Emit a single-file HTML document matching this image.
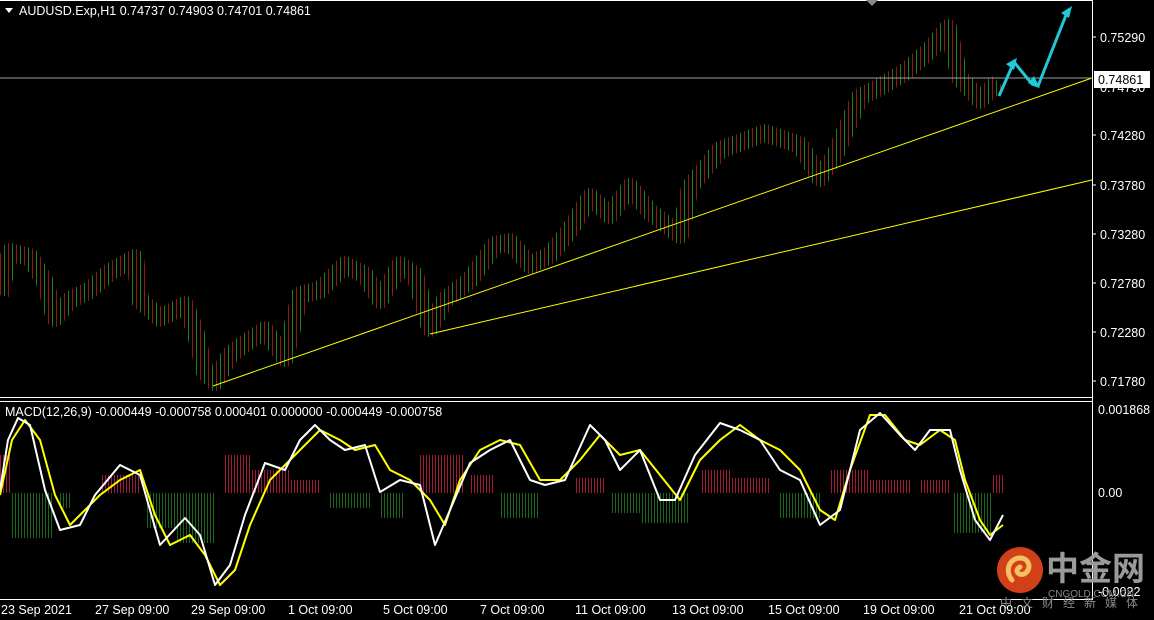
<!DOCTYPE html>
<html><head><meta charset="utf-8"><style>
html,body{margin:0;padding:0;background:#000;width:1154px;height:620px;overflow:hidden}
</style></head><body>
<svg width="1154" height="620" viewBox="0 0 1154 620" xmlns="http://www.w3.org/2000/svg" font-family="Liberation Sans, sans-serif">
<defs>
<pattern id="bars" x="0" y="0" width="8" height="4" patternUnits="userSpaceOnUse">
<rect x="0" y="0" width="1" height="4" fill="#c02020"/><rect x="4" y="0" width="1" height="4" fill="#20b020"/>
</pattern>
<pattern id="hr" width="3" height="4" patternUnits="userSpaceOnUse"><rect width="1" height="4" fill="#a01c38"/></pattern>
<pattern id="hg" width="3" height="4" patternUnits="userSpaceOnUse"><rect width="1" height="4" fill="#1a661a"/></pattern>
</defs>
<rect width="1154" height="620" fill="#000"/>
<polyline fill="none" stroke="url(#bars)" stroke-width="18" stroke-linejoin="round" opacity="0.75" points="0,295 10,252 30,257 45,282 55,318 70,300 90,290 110,272 135,258 140,300 160,318 185,305 195,330 205,372 215,382 230,355 250,340 265,330 285,358 300,295 320,290 345,265 365,275 380,300 400,265 415,275 430,328 445,300 470,280 495,245 510,242 530,265 550,255 570,230 590,197 610,215 630,187 650,212 680,235 690,187 720,150 765,133 800,145 820,178 835,155 860,97 880,87 905,72 930,50 948,28 960,78 980,100 998,82"/>
<line x1="213" y1="386" x2="1092" y2="78" stroke="#ffff00" stroke-width="1"/>
<line x1="430" y1="334" x2="1092" y2="180" stroke="#ffff00" stroke-width="1"/>
<line x1="0" y1="78" x2="1092" y2="78" stroke="#a0a0a0" stroke-width="1"/>
<g stroke="#22c8d8" stroke-width="3" fill="#22c8d8">
<polyline fill="none" points="999,96 1014,62 1032,84 1038,86 1068,10"/>
<polygon points="1017,58 1006,64 1014,70" stroke="none"/>
<polygon points="1040,88 1028,83 1034,76" stroke="none"/>
<polygon points="1072,6 1061,13 1069,18" stroke="none"/>
</g>
<line x1="0" y1="0.5" x2="1093" y2="0.5" stroke="#fff"/>
<line x1="1092.5" y1="0" x2="1092.5" y2="600" stroke="#fff"/>
<line x1="0" y1="397.5" x2="1093" y2="397.5" stroke="#fff"/>
<line x1="0" y1="401.5" x2="1093" y2="401.5" stroke="#fff"/>
<line x1="0" y1="599.5" x2="1093" y2="599.5" stroke="#fff"/>
<polygon points="866,0 878,0 872,6" fill="#888"/>
<polygon points="5,8 13,8 9,13" fill="#fff"/>
<text x="19" y="15" font-size="12.5" fill="#fff">AUDUSD.Exp,H1  0.74737 0.74903 0.74701 0.74861</text>
<g font-size="12.5" fill="#fff">
<text x="1100" y="42">0.75290</text>
<text x="1100" y="92">0.74790</text>
<text x="1100" y="140">0.74280</text>
<text x="1100" y="190">0.73780</text>
<text x="1100" y="239">0.73280</text>
<text x="1100" y="288">0.72780</text>
<text x="1100" y="337">0.72280</text>
<text x="1100" y="386">0.71780</text>
</g>
<g stroke="#fff"><line x1="1092" y1="37" x2="1096" y2="37"/><line x1="1092" y1="135" x2="1096" y2="135"/><line x1="1092" y1="185" x2="1096" y2="185"/><line x1="1092" y1="234" x2="1096" y2="234"/><line x1="1092" y1="283" x2="1096" y2="283"/><line x1="1092" y1="332" x2="1096" y2="332"/><line x1="1092" y1="381" x2="1096" y2="381"/></g>
<rect x="1094" y="71" width="56" height="17" fill="#fff"/>
<text x="1098" y="84" font-size="12.5" fill="#000">0.74861</text>
<g>
<rect x="0" y="455" width="12" height="38" fill="url(#hr)"/>
<rect x="12" y="493" width="40" height="45" fill="url(#hg)"/>
<rect x="60" y="493" width="12" height="15" fill="url(#hg)"/>
<rect x="100" y="475" width="40" height="18" fill="url(#hr)"/>
<rect x="145" y="493" width="30" height="35" fill="url(#hg)"/>
<rect x="175" y="493" width="40" height="50" fill="url(#hg)"/>
<rect x="225" y="455" width="25" height="38" fill="url(#hr)"/>
<rect x="250" y="470" width="40" height="23" fill="url(#hr)"/>
<rect x="290" y="480" width="30" height="13" fill="url(#hr)"/>
<rect x="330" y="493" width="40" height="15" fill="url(#hg)"/>
<rect x="380" y="493" width="25" height="25" fill="url(#hg)"/>
<rect x="420" y="455" width="45" height="38" fill="url(#hr)"/>
<rect x="470" y="475" width="25" height="18" fill="url(#hr)"/>
<rect x="500" y="493" width="40" height="25" fill="url(#hg)"/>
<rect x="575" y="478" width="30" height="15" fill="url(#hr)"/>
<rect x="610" y="493" width="30" height="20" fill="url(#hg)"/>
<rect x="640" y="493" width="50" height="30" fill="url(#hg)"/>
<rect x="700" y="470" width="30" height="23" fill="url(#hr)"/>
<rect x="730" y="478" width="40" height="15" fill="url(#hr)"/>
<rect x="780" y="493" width="40" height="25" fill="url(#hg)"/>
<rect x="830" y="470" width="40" height="23" fill="url(#hr)"/>
<rect x="870" y="480" width="40" height="13" fill="url(#hr)"/>
<rect x="920" y="480" width="30" height="13" fill="url(#hr)"/>
<rect x="952" y="493" width="40" height="40" fill="url(#hg)"/>
<rect x="993" y="475" width="12" height="18" fill="url(#hr)"/>
</g>
<polyline fill="none" stroke="#ffff00" stroke-width="2" stroke-linejoin="round" points="0,495 12,440 25,420 40,440 55,495 70,525 85,510 100,495 120,480 140,470 155,515 170,545 190,535 205,555 220,585 235,570 250,525 270,480 290,460 305,445 320,430 340,440 355,450 375,445 390,470 410,480 430,500 445,525 460,480 480,450 500,440 520,445 540,480 560,480 580,460 600,435 620,455 640,450 660,475 680,500 700,460 720,440 740,425 760,440 780,450 800,470 820,510 835,520 850,470 870,415 885,415 905,440 920,445 940,430 955,440 965,480 980,520 990,535 1003,525"/>
<polyline fill="none" stroke="#ffffff" stroke-width="2" stroke-linejoin="round" points="0,490 8,440 18,418 30,425 45,490 60,530 80,525 95,495 120,465 140,475 160,545 185,518 200,535 215,585 230,565 245,515 265,463 285,470 300,440 315,425 330,440 345,450 365,445 380,492 400,480 420,485 435,545 450,510 470,463 490,450 510,440 530,480 545,485 565,480 590,425 605,440 620,470 640,450 660,500 675,500 695,455 720,423 740,430 760,440 780,470 800,480 820,525 840,510 860,430 880,413 900,435 915,450 930,430 950,430 960,470 975,520 990,540 1003,515"/>
<text x="5" y="416" font-size="12.5" fill="#fff">MACD(12,26,9) -0.000449 -0.000758 0.000401 0.000000 -0.000449 -0.000758</text>
<g font-size="12.5" fill="#fff">
<text x="1098" y="414">0.001868</text>
<text x="1098" y="497">0.00</text>
<text x="1098" y="596">-0.0022</text>
</g>
<g font-size="12.5" fill="#fff">
<text x="1" y="614">23 Sep 2021</text>
<text x="95" y="614">27 Sep 09:00</text>
<text x="191" y="614">29 Sep 09:00</text>
<text x="288" y="614">1 Oct 09:00</text>
<text x="383" y="614">5 Oct 09:00</text>
<text x="480" y="614">7 Oct 09:00</text>
<text x="575" y="614">11 Oct 09:00</text>
<text x="672" y="614">13 Oct 09:00</text>
<text x="768" y="614">15 Oct 09:00</text>
<text x="863" y="614">19 Oct 09:00</text>
<text x="959" y="614">21 Oct 09:00</text>
</g>
<circle cx="1020" cy="570" r="23" fill="#d2401a"/>
<path d="M1012,580 C1004,570 1010,558 1020,558 C1030,558 1032,570 1024,574 C1018,576 1014,570 1020,567" fill="none" stroke="#f5c060" stroke-width="5" stroke-linecap="round"/>
<text x="1046" y="580" font-size="33" fill="#9a9a9a" font-family="Noto Sans CJK SC, sans-serif" font-weight="bold">中金网</text>
<text x="1048" y="597" font-size="10" fill="#8a8a8a">CNGOLD.COM.CN</text>
<text x="1000" y="607" font-size="12" fill="#8a8a8a" letter-spacing="9" font-family="Noto Sans CJK SC, sans-serif">中文财经新媒体</text>
</svg>
</body></html>
